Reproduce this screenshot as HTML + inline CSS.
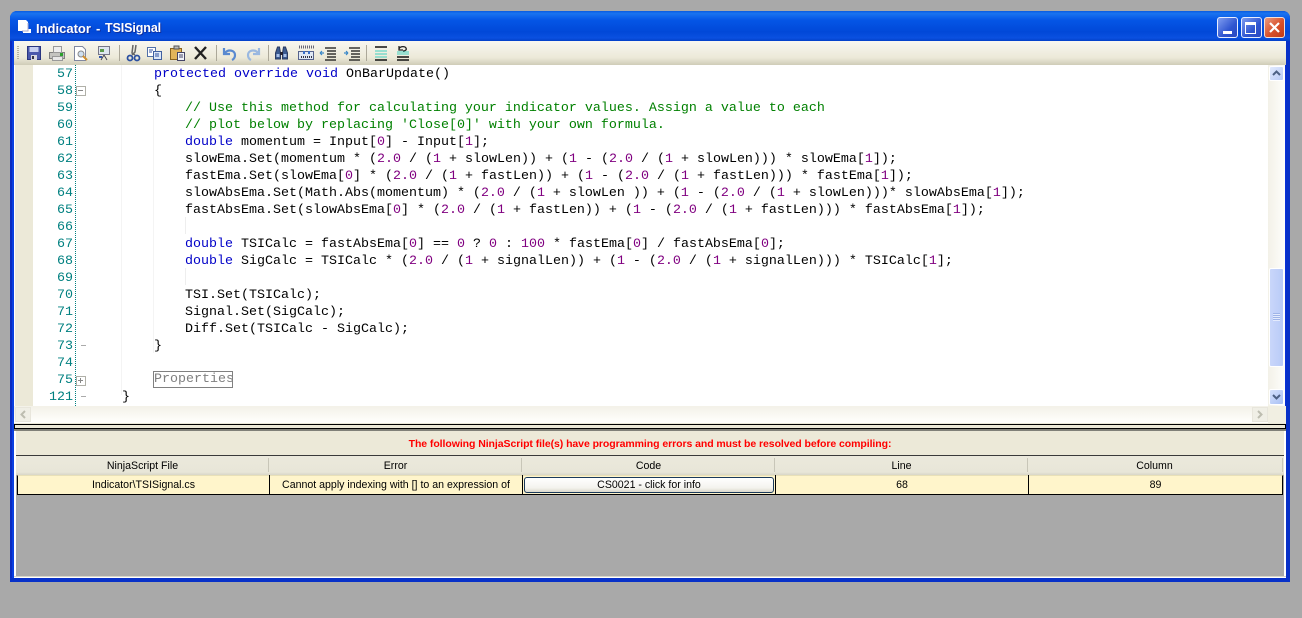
<!DOCTYPE html>
<html><head><meta charset="utf-8"><style>
html,body{margin:0;padding:0;width:1302px;height:618px;overflow:hidden;background:#a9a9a9}
div,svg,span.a{position:absolute}
#code div{position:absolute;white-space:pre;font:13.33px/17px "Liberation Mono",monospace;color:#000;left:90px;height:17px}
.n{position:absolute;width:40px;left:33px;text-align:right;font:13.33px/17px "Liberation Mono",monospace;color:#008080}
b{font-weight:normal;color:#0000c8}
i{font-style:normal;color:#800080}
u{text-decoration:none;color:#008000}
.t{font:10.6px/20px "Liberation Sans",sans-serif;color:#000;text-align:center;white-space:nowrap}
.fold{width:8px;height:8px;border:1px solid #b0b0a8;left:76px;background:#fff}
</style></head><body>
<!-- window -->
<div style="left:10px;top:11px;width:1280px;height:571px;background:#0831d9;border-radius:7px 7px 0 0"></div>
<div style="left:10px;top:11px;width:1280px;height:30px;border-radius:7px 7px 0 0;background:linear-gradient(#0a5be0 0,#1a74f0 8%,#0556e6 30%,#0148d8 70%,#0a50e0 90%,#0340c8 100%)"></div>
<div style="left:10px;top:41px;width:2px;height:541px;background:#0a2bc0"></div>
<div style="left:12px;top:41px;width:2px;height:539px;background:#0a3fe0"></div>
<div style="left:1286px;top:41px;width:4px;height:541px;background:#0831c8"></div>
<div style="left:10px;top:578px;width:1280px;height:4px;background:#0831c8"></div>
<!-- title -->
<svg style="left:17px;top:19px" width="16" height="16"><path d="M1 1H9L11 3V10H14V14H6V12H1Z" fill="#fff"/><path d="M11 4V12H5" fill="none" stroke="#aac" stroke-width="1"/></svg>
<div style="left:36px;top:20px;font:bold 13px/17px 'Liberation Sans',sans-serif;color:#fff;white-space:nowrap;text-shadow:1px 1px 0 #0f2f9f">Indicator</div>
<div style="left:96px;top:20px;font:bold 13px/17px 'Liberation Sans',sans-serif;color:#fff;white-space:nowrap;text-shadow:1px 1px 0 #0f2f9f">-</div>
<div style="left:105px;top:20px;font:bold 12.5px/17px 'Liberation Sans',sans-serif;letter-spacing:-.1px;color:#fff;white-space:nowrap;text-shadow:1px 1px 0 #0f2f9f">TSISignal</div>
<!-- title buttons -->
<div style="left:1217px;top:17px;width:19px;height:19px;border:1px solid #e8eeff;border-radius:3px;background:linear-gradient(135deg,#7f9df0,#2f55d0 60%,#2a48c0)"></div>
<div style="left:1223px;top:31px;width:9px;height:3px;background:#fff"></div>
<div style="left:1241px;top:17px;width:19px;height:19px;border:1px solid #e8eeff;border-radius:3px;background:linear-gradient(135deg,#7f9df0,#2f55d0 60%,#2a48c0)"></div>
<div style="left:1245px;top:22px;width:9px;height:8px;border:1px solid #fff;border-top:3px solid #fff"></div>
<div style="left:1264px;top:17px;width:19px;height:19px;border:1px solid #f2e0d8;border-radius:3px;background:linear-gradient(135deg,#e89a80,#d9502a 55%,#c03a18)"></div>
<svg style="left:1265px;top:18px" width="19" height="19"><path d="M5 5L14 14M14 5L5 14" stroke="#fff" stroke-width="2.2"/></svg>
<!-- toolbar -->
<div style="left:14px;top:41px;width:1272px;height:24px;background:linear-gradient(#f8f7f1,#ece9d8 70%,#cfccb8)"></div>
<svg style="left:14px;top:41px" width="420" height="24" fill="none">
<path d="M4 5v14" stroke="#b5b2a0" stroke-dasharray="1 1" stroke-width="2"/>
<!-- save -->
<path d="M13.500 5.500h13v13h-13z" fill="#4a58ac" stroke="#2a3680"/><path d="M15.500 6h9v5h-9z" fill="#c8d0f0"/><path d="M17 14h6v5h-6z" fill="#d8d8e0"/><path d="M18 15h2v3h-2z" fill="#334"/>
<!-- print -->
<path d="M35.500 11.500h15v6h-15z" fill="#c4c4c0" stroke="#808080"/><path d="M39.500 5.500h8v6h-8z" fill="#eee" stroke="#999"/><path d="M38.500 15.500h10v4h-10z" fill="#e8e8e8" stroke="#999"/><path d="M46 12h3v3h-3z" fill="#2ca02c"/>
<!-- preview -->
<path d="M60.500 5.500h8l3 3v11h-11z" fill="#fff" stroke="#8088a0"/><circle cx="67" cy="13" r="3" fill="#cfe0f0" stroke="#888"/><path d="M69 15l4 4" stroke="#d09030" stroke-width="2"/>
<!-- presentation -->
<path d="M84.500 5.500h11v8h-11z" fill="#dfe6f0" stroke="#778"/><path d="M90 14l-3 5M90 14l3 5" stroke="#445"/><path d="M86 8h4v3h-4z" fill="#5a9a4a"/><path d="M85 16h3" stroke="#3355aa" stroke-width="2"/>
<path d="M105.500 4v16" stroke="#aca899"/>
<!-- cut -->
<path d="M119 4l-1 8 3 2M122 4l-1 7 -3 3" stroke="#666" stroke-width="1.500"/><circle cx="116" cy="17" r="2.500" stroke="#2a4fa0" stroke-width="1.800"/><circle cx="123" cy="17" r="2.500" stroke="#2a4fa0" stroke-width="1.800"/>
<!-- copy -->
<path d="M133.500 6.500h8v9h-8z" fill="#fff" stroke="#5070a8"/><path d="M139.500 10.500h8v8h-8z" fill="#dce8f8" stroke="#4060a0"/><path d="M135 9h4M135 11h3M141 13h4M141 15h4" stroke="#3050a0"/>
<!-- paste -->
<path d="M156.500 7.500h11v11h-11z" fill="#e2b45a" stroke="#8a6420"/><path d="M160 5h5v3h-5z" fill="#bbb" stroke="#555"/><path d="M163.500 11.500h7v8h-7z" fill="#f2f4fa" stroke="#446"/><path d="M165 14h4M165 16h4" stroke="#446"/>
<!-- delete -->
<path d="M181 6l11 12M192 6l-11 12" stroke="#222" stroke-width="2.400"/>
<path d="M202.500 4v16" stroke="#aca899"/>
<!-- undo/redo -->
<path d="M210 7v6h6M211 12c3-4 10-3 10 2 0 2-1 4-3 5" stroke="#5a8ad0" stroke-width="2.200"/>
<path d="M245 7v6h-6M244 12c-3-4-10-3-10 2 0 2 1 4 3 5" stroke="#9ab8e0" stroke-width="2.200"/>
<path d="M254.500 4v16" stroke="#aca899"/>
<!-- find -->
<path d="M261.500 12l2-6h2l1 6v6h-5zM268.500 12l1-6h2l2 6v6h-5z" fill="#3a5a90" stroke="#2a3a60"/><path d="M266 11h3v3h-3z" fill="#223"/><path d="M262.500 13h3v3h-3zM269.500 13h3v3h-3z" fill="#a8c0e8"/>
<!-- grid -->
<path d="M284.500 10.500h15v8h-15z" fill="#dfe8f4" stroke="#55628c"/><path d="M285 6h15" stroke="#667" stroke-dasharray="1 1" stroke-width="3"/><path d="M287 16h11" stroke="#334" stroke-dasharray="1 1" stroke-width="2"/><path d="M290 10v3M295 10v3" stroke="#3a70c8" stroke-width="2"/>
<!-- indent -->
<path d="M311 7h11M313 10h9M313 13h9M313 16h9M311 19h11" stroke="#111" stroke-width="1.300"/><path d="M306 12h4M306 12l2-2M306 12l2 2" stroke="#3a88c8" stroke-width="1.200"/>
<path d="M335 7h11M337 10h9M337 13h9M337 16h9M335 19h11" stroke="#111" stroke-width="1.300"/><path d="M330 12h4M334 12l-2-2M334 12l-2 2" stroke="#3a88c8" stroke-width="1.200"/>
<path d="M352.500 4v16" stroke="#aca899"/>
<!-- list -->
<path d="M361 6h12M361 19h12" stroke="#111" stroke-width="1.500"/><path d="M361 10h12M361 13h12M361 16h12" stroke="#40d0c0"/>
<path d="M383 19h12M383 16h12" stroke="#111" stroke-width="1.500"/><path d="M383 11h12M383 13h12" stroke="#40d0c0"/><path d="M385 8c1-3 6-3 7-1 1 2-1 3-3 3M385 5v4h4" stroke="#222" stroke-width="1.300"/>
</svg>
<!-- editor -->
<div style="left:14px;top:65px;width:1254px;height:341px;background:#fff"></div>
<div style="left:15px;top:65px;width:18px;height:341px;background:#ece9d8"></div>
<div style="left:75px;top:65px;height:341px;border-left:1px dotted #008080;width:0"></div>
<div style="left:121px;top:65px;width:1px;height:330px;background:#f4f4f4"></div>
<div style="left:153px;top:98px;width:1px;height:255px;background:#f4f4f4"></div>
<div style="left:185px;top:217px;width:1px;height:17px;background:#eee"></div>
<div style="left:185px;top:268px;width:1px;height:17px;background:#eee"></div>
<div id="nums">
<span class="n" style="top:66px">57</span><span class="n" style="top:83px">58</span><span class="n" style="top:100px">59</span><span class="n" style="top:117px">60</span><span class="n" style="top:134px">61</span><span class="n" style="top:151px">62</span><span class="n" style="top:168px">63</span><span class="n" style="top:185px">64</span><span class="n" style="top:202px">65</span><span class="n" style="top:219px">66</span><span class="n" style="top:236px">67</span><span class="n" style="top:253px">68</span><span class="n" style="top:270px">69</span><span class="n" style="top:287px">70</span><span class="n" style="top:304px">71</span><span class="n" style="top:321px">72</span><span class="n" style="top:338px">73</span><span class="n" style="top:355px">74</span><span class="n" style="top:372px">75</span><span class="n" style="top:389px">121</span>
</div>
<!-- folds -->
<div class="fold" style="top:86px"></div><div style="left:78px;top:90px;width:5px;height:1px;background:#888"></div>
<div class="fold" style="top:376px"></div><div style="left:78px;top:380px;width:5px;height:1px;background:#888"></div><div style="left:80px;top:378px;width:1px;height:5px;background:#888"></div>
<div style="left:81px;top:345px;width:5px;height:1px;background:#aaa"></div>
<div style="left:81px;top:396px;width:5px;height:1px;background:#aaa"></div>
<div id="code">
<div style="top:66px;left:154px"><b>protected</b> <b>override</b> <b>void</b> OnBarUpdate()</div>
<div style="top:83px;left:154px">{</div>
<div style="top:100px;left:185px"><u>// Use this method for calculating your indicator values. Assign a value to each</u></div>
<div style="top:117px;left:185px"><u>// plot below by replacing 'Close[0]' with your own formula.</u></div>
<div style="top:134px;left:185px"><b>double</b> momentum = Input[<i>0</i>] - Input[<i>1</i>];</div>
<div style="top:151px;left:185px">slowEma.Set(momentum * (<i>2.0</i> / (<i>1</i> + slowLen)) + (<i>1</i> - (<i>2.0</i> / (<i>1</i> + slowLen))) * slowEma[<i>1</i>]);</div>
<div style="top:168px;left:185px">fastEma.Set(slowEma[<i>0</i>] * (<i>2.0</i> / (<i>1</i> + fastLen)) + (<i>1</i> - (<i>2.0</i> / (<i>1</i> + fastLen))) * fastEma[<i>1</i>]);</div>
<div style="top:185px;left:185px">slowAbsEma.Set(Math.Abs(momentum) * (<i>2.0</i> / (<i>1</i> + slowLen )) + (<i>1</i> - (<i>2.0</i> / (<i>1</i> + slowLen)))* slowAbsEma[<i>1</i>]);</div>
<div style="top:202px;left:185px">fastAbsEma.Set(slowAbsEma[<i>0</i>] * (<i>2.0</i> / (<i>1</i> + fastLen)) + (<i>1</i> - (<i>2.0</i> / (<i>1</i> + fastLen))) * fastAbsEma[<i>1</i>]);</div>
<div style="top:236px;left:185px"><b>double</b> TSICalc = fastAbsEma[<i>0</i>] == <i>0</i> ? <i>0</i> : <i>100</i> * fastEma[<i>0</i>] / fastAbsEma[<i>0</i>];</div>
<div style="top:253px;left:185px"><b>double</b> SigCalc = TSICalc * (<i>2.0</i> / (<i>1</i> + signalLen)) + (<i>1</i> - (<i>2.0</i> / (<i>1</i> + signalLen))) * TSICalc[<i>1</i>];</div>
<div style="top:287px;left:185px">TSI.Set(TSICalc);</div>
<div style="top:304px;left:185px">Signal.Set(SigCalc);</div>
<div style="top:321px;left:185px">Diff.Set(TSICalc - SigCalc);</div>
<div style="top:338px;left:154px">}</div>
<div style="top:371px;left:153px;height:15px;line-height:16px;border:1px solid #808080;color:#808080;width:78px;padding-left:0">Properties</div>
<div style="top:389px;left:122px">}</div>
</div>
<!-- vertical scrollbar -->
<div style="left:1268px;top:65px;width:17px;height:341px;background:linear-gradient(90deg,#f3f1e8,#fefefb)"></div>
<div style="left:1269px;top:66px;width:15px;height:15px;border-radius:2px;border:1px solid #fff;box-sizing:border-box;background:linear-gradient(135deg,#e1eafe,#b8caf6)"></div>
<svg style="left:1269px;top:66px" width="15" height="15"><path d="M4 9l3.500-3.500L11 9" fill="none" stroke="#4d6185" stroke-width="2"/></svg>
<div style="left:1269px;top:268px;width:15px;height:99px;box-sizing:border-box;border:1px solid #fff;border-radius:2px;background:linear-gradient(90deg,#c9d6fa,#b9cbf8)"></div>
<div style="left:1273px;top:313px;width:7px;height:8px;background:repeating-linear-gradient(#9fb4e8 0 1px,#e4ebfd 1px 2px)"></div>
<div style="left:1269px;top:389px;width:15px;height:16px;border-radius:2px;border:1px solid #fff;box-sizing:border-box;background:linear-gradient(135deg,#d6e2fd,#a9c0f4)"></div>
<svg style="left:1269px;top:389px" width="15" height="16"><path d="M4 6l3.500 3.500L11 6" fill="none" stroke="#4d6185" stroke-width="2"/></svg>
<!-- horizontal scrollbar -->
<div style="left:14px;top:406px;width:1272px;height:17px;background:linear-gradient(#f3f1e8,#fefefb 90%)"></div>
<div style="left:1268px;top:406px;width:18px;height:17px;background:#f1efe2"></div>
<div style="left:15px;top:407px;width:16px;height:15px;box-sizing:border-box;border:1px solid #e8e6dc;background:#f0efe6"></div>
<svg style="left:15px;top:407px" width="16" height="15"><path d="M10 4L6.500 7.500 10 11" fill="none" stroke="#bdbdb0" stroke-width="2"/></svg>
<div style="left:1252px;top:407px;width:16px;height:15px;box-sizing:border-box;border:1px solid #e8e6dc;background:#f0efe6"></div>
<svg style="left:1252px;top:407px" width="16" height="15"><path d="M6 4l3.500 3.500L6 11" fill="none" stroke="#bdbdb0" stroke-width="2"/></svg>
<!-- splitter -->
<div style="left:14px;top:423px;width:1272px;height:2px;background:#ece9d8"></div>
<div style="left:14px;top:424px;width:1272px;height:5px;box-sizing:border-box;border:1px solid #000;background:#ece9d8"></div>
<div style="left:14px;top:429px;width:1272px;height:2px;background:#808078"></div>
<!-- bottom panel -->
<div style="left:14px;top:431px;width:1272px;height:147px;background:#fff"></div>
<div style="left:16px;top:431px;width:1268px;height:145px;background:#a9a9a9"></div>
<div style="left:16px;top:431px;width:1268px;height:25px;background:#ece9d8"></div>
<div style="left:14px;top:576px;width:1272px;height:1px;background:#d8d6c8"></div>
<div style="left:16px;top:437px;width:1268px;text-align:center;font:bold 10.5px/15px 'Liberation Sans',sans-serif;color:#ff0000;letter-spacing:-.07px;white-space:nowrap">The following NinjaScript file(s) have programming errors and must be resolved before compiling:</div>
<!-- header -->
<div style="left:16px;top:455px;width:1268px;height:1px;background:#3a3a3a"></div>
<div style="left:16px;top:456px;width:1268px;height:19px;background:linear-gradient(#ebe9dc,#e8e6d8 85%,#d8d6c8)"></div>
<div class="t" style="left:17px;top:456px;width:251px">NinjaScript File</div>
<div class="t" style="left:270px;top:456px;width:251px">Error</div>
<div class="t" style="left:523px;top:456px;width:251px">Code</div>
<div class="t" style="left:776px;top:456px;width:251px">Line</div>
<div class="t" style="left:1029px;top:456px;width:251px">Column</div>
<div style="left:268px;top:458px;width:1px;height:14px;background:#c8c6b8"></div>
<div style="left:521px;top:458px;width:1px;height:14px;background:#c8c6b8"></div>
<div style="left:774px;top:458px;width:1px;height:14px;background:#c8c6b8"></div>
<div style="left:1027px;top:458px;width:1px;height:14px;background:#c8c6b8"></div>
<div style="left:1282px;top:458px;width:1px;height:14px;background:#c8c6b8"></div>
<!-- row -->
<div style="left:17px;top:475px;width:1266px;height:20px;box-sizing:border-box;background:#fff5cb;border:1px solid #000;border-top:1px solid #e8e0b8"></div>
<div style="left:269px;top:475px;width:1px;height:20px;background:#000"></div>
<div style="left:522px;top:475px;width:1px;height:20px;background:#000"></div>
<div style="left:775px;top:475px;width:1px;height:20px;background:#000"></div>
<div style="left:1028px;top:475px;width:1px;height:20px;background:#000"></div>
<div class="t" style="left:18px;top:475px;width:251px">Indicator\TSISignal.cs</div>
<div class="t" style="left:270px;top:475px;width:252px;overflow:hidden">Cannot apply indexing with [] to an expression of</div>
<div style="left:524px;top:477px;width:250px;height:16px;box-sizing:border-box;border:1px solid #1a3a5c;border-radius:3px;background:linear-gradient(#fff,#f4f3ee 70%,#dcd9cc)"></div>
<div class="t" style="left:524px;top:475px;width:250px">CS0021 - click for info</div>
<div class="t" style="left:776px;top:475px;width:252px">68</div>
<div class="t" style="left:1029px;top:475px;width:253px">89</div>
</body></html>
